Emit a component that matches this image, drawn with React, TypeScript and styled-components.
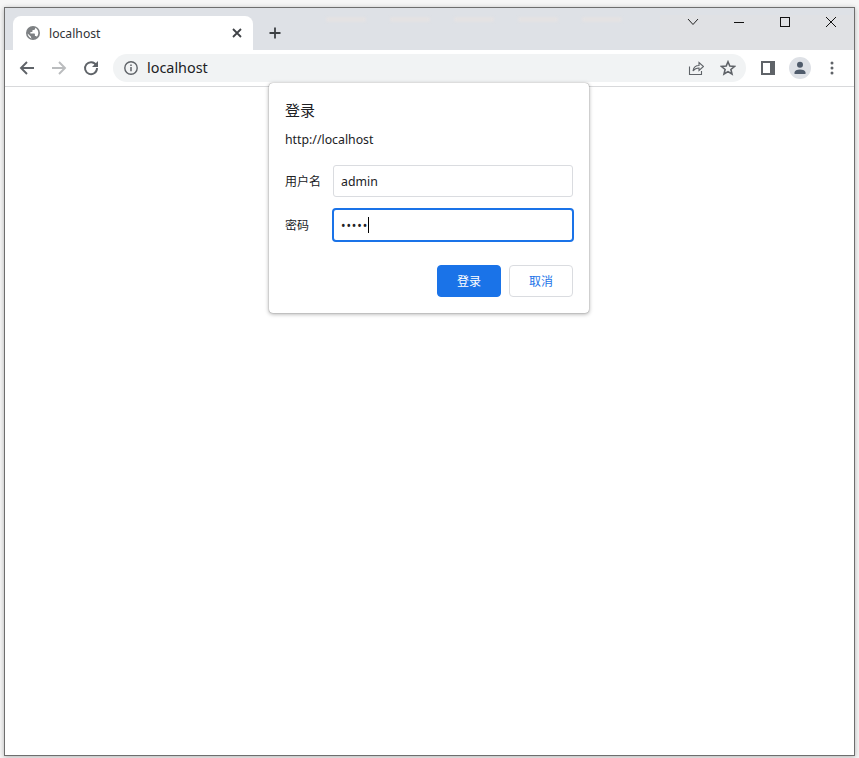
import React from 'react';
import styled, { createGlobalStyle } from 'styled-components';

const UI_FONT = `"Noto Sans", "Open Sans", "Noto Sans CJK SC", sans-serif`;
const CJK_FONT = `"Noto Sans CJK SC", "Noto Sans", sans-serif`;

const GlobalStyle = createGlobalStyle`
    html, body {
        margin: 0;
        height: 100%;
    }
    body {
        background: #f6f6f6;
        overflow: hidden;
        font-family: ${UI_FONT};
    }
`;

const Window = styled.div`
    position: relative;
    box-sizing: border-box;
    width: 851px;
    height: 749px;
    margin: 7px 0 0 4px;
    border: 1px solid #6e6e6e;
    background: #fff;
    box-shadow: 0 1px 5px rgba(0, 0, 0, 0.28);
    display: flex;
    flex-direction: column;
`;

const TabStrip = styled.div`
    height: 42px;
    flex: none;
    background: #dee1e6;
    display: flex;
    align-items: flex-end;
    padding-left: 8px;
`;

const Tab = styled.div`
    width: 240px;
    height: 34px;
    box-sizing: border-box;
    background: #fff;
    border-radius: 8px 8px 0 0;
    display: flex;
    align-items: center;
    padding: 0 8px 0 12px;
    gap: 8px;
`;

const TabTitle = styled.span`
    flex: 1;
    font-size: 12.2px;
    color: #303236;
`;

const NewTab = styled.div`
    width: 28px;
    height: 34px;
    margin-left: 8px;
    display: flex;
    align-items: center;
    justify-content: center;
`;

const GhostTabs = styled.div`
    flex: 1;
    align-self: flex-start;
    display: flex;
    gap: 24px;
    padding: 9px 0 0 37px;
`;

const GhostTab = styled.span<{ $w: number }>`
    width: ${p => p.$w}px;
    height: 5px;
    background: #e4e2e3;
    border-radius: 2px;
    filter: blur(0.8px);
`;

const Caption = styled.div`
    width: 194px;
    height: 35px;
    align-self: flex-end;
    flex: none;
    background: #e0e1e4;
    position: relative;
`;

const CaptionRow = styled.div`
    position: absolute;
    top: -7px;
    right: 0;
    display: flex;
    height: 28px;
`;

const CaptionButton = styled.div<{ $w: number }>`
    width: ${p => p.$w}px;
    display: flex;
    align-items: center;
    justify-content: center;
`;

const Toolbar = styled.div`
    height: 37px;
    flex: none;
    box-sizing: border-box;
    display: flex;
    align-items: center;
    padding: 0 6px 0 6px;
    background: #fff;
    border-bottom: 1px solid #d8d9db;
`;

const ToolButton = styled.div`
    width: 32px;
    height: 28px;
    flex: none;
    display: flex;
    align-items: center;
    justify-content: center;
`;

const Omnibox = styled.div`
    flex: 1;
    height: 28px;
    background: #f1f3f4;
    border-radius: 14px;
    display: flex;
    align-items: center;
    padding: 0 2px 0 10px;
    margin: 0 6px;
`;

const Address = styled.span`
    flex: 1;
    margin-left: 8px;
    margin-top: -1px;
    font-size: 14.4px;
    color: #202124;
`;

const Avatar = styled.div`
    width: 22px;
    height: 22px;
    border-radius: 50%;
    background: #dee1e6;
    display: flex;
    align-items: center;
    justify-content: center;
`;

const Page = styled.main`
    flex: 1;
    background: #fff;
`;

const Dialog = styled.form`
    position: absolute;
    left: 264px;
    top: 75px;
    width: 320px;
    height: 230px;
    box-sizing: border-box;
    padding: 16px;
    background: #fff;
    border-radius: 4px;
    box-shadow: 0 0 1px rgba(0, 0, 0, 0.5), 0 1px 4px rgba(0, 0, 0, 0.35);
    display: flex;
    flex-direction: column;
`;

const Title = styled.h2`
    margin: 1px 0 0;
    font: 400 15px/20px ${CJK_FONT};
    color: #202124;
`;

const Origin = styled.p`
    margin: 10px 0 0;
    font-size: 12.3px;
    line-height: 20px;
    color: #202124;
`;

const Field = styled.div<{ $mt: number }>`
    margin-top: ${p => p.$mt}px;
    display: flex;
    align-items: center;
`;

const Label = styled.label`
    width: 48px;
    flex: none;
    font: 400 12px/16px ${CJK_FONT};
    color: #202124;
`;

const InputBox = styled.div<{ $focus?: boolean }>`
    flex: 1;
    box-sizing: border-box;
    height: ${p => (p.$focus ? 34 : 32)}px;
    margin: ${p => (p.$focus ? '0 -1px' : '0')};
    border: ${p => (p.$focus ? '2px solid #1a73e8' : '1px solid #dadce0')};
    border-radius: ${p => (p.$focus ? 4 : 3)}px;
    padding-left: 7px;
    display: flex;
    align-items: center;
    font-size: 12.3px;
    color: #202124;
`;

const Dots = styled.span`
    font-size: 12px;
    letter-spacing: 0.9px;
    color: #202124;
`;

const Caret = styled.span`
    width: 1px;
    height: 16px;
    background: #000;
`;

const Actions = styled.div`
    margin-top: auto;
    display: flex;
    justify-content: flex-end;
    gap: 8px;
`;

const Button = styled.button<{ $primary?: boolean }>`
    width: 64px;
    height: 32px;
    box-sizing: border-box;
    border-radius: 4px;
    border: 1px solid ${p => (p.$primary ? '#1a73e8' : '#dadce0')};
    background: ${p => (p.$primary ? '#1a73e8' : '#fff')};
    color: ${p => (p.$primary ? '#fff' : '#1a73e8')};
    font: 400 12px/16px ${CJK_FONT};
    padding: 0;
`;

const Globe = () => (
    <svg width="16" height="16" viewBox="0 0 16 16">
        <circle cx="8" cy="8" r="7" fill="#7d8083" />
        <path
            d="M7.2 13.4C4.8 13 2.8 10.900 2.6 8.400l3.400 3.300v.8c0 .4.5.7 1.200.9zM11.900 11.800c-.2-.5-.7-.9-1.200-.9h-.8V9.100c0-.3-.3-.6-.6-.6H5.400V6.900h1.500c.3 0 .6-.3.6-.6V4.900h1.400c.7 0 1.200-.5 1.200-1.200v-.9c1.900.8 3.200 2.700 3.200 4.900 0 1.600-.6 3-1.500 4.100z"
            fill="#fff"
        />
    </svg>
);

const App: React.FC = () => (
    <React.Fragment>
        <GlobalStyle />
        <Window>
            <TabStrip>
                <Tab>
                    <Globe />
                    <TabTitle>localhost</TabTitle>
                    <svg width="16" height="16" viewBox="0 0 16 16">
                        <path d="M4 4l8 8M12 4l-8 8" stroke="#3f4246" strokeWidth="1.8" />
                    </svg>
                </Tab>
                <NewTab>
                    <svg width="16" height="16" viewBox="0 0 16 16">
                        <path d="M8 2.500v11M2.500 8h11" stroke="#3c4043" strokeWidth="1.8" />
                    </svg>
                </NewTab>
                <GhostTabs>
                    {[40, 40, 40, 40, 40].map((w, i) => (
                        <GhostTab key={i} $w={w} />
                    ))}
                </GhostTabs>
                <Caption>
                    <CaptionRow>
                        <CaptionButton $w={46}>
                            <svg width="12" height="8" viewBox="0 0 12 8">
                                <path d="M1 1l5 5.500L11 1" fill="none" stroke="#222" strokeWidth="1" />
                            </svg>
                        </CaptionButton>
                        <CaptionButton $w={46}>
                            <svg width="11" height="11" viewBox="0 0 11 11">
                                <path d="M0 5.500h10" stroke="#111" strokeWidth="1" />
                            </svg>
                        </CaptionButton>
                        <CaptionButton $w={46}>
                            <svg width="11" height="11" viewBox="0 0 11 11">
                                <rect x="0.500" y="0.500" width="9" height="9" fill="none" stroke="#111" />
                            </svg>
                        </CaptionButton>
                        <CaptionButton $w={46}>
                            <svg width="11" height="11" viewBox="0 0 11 11">
                                <path d="M0 0l10 10M10 0L0 10" stroke="#111" strokeWidth="1" />
                            </svg>
                        </CaptionButton>
                    </CaptionRow>
                </Caption>
            </TabStrip>
            <Toolbar>
                <ToolButton>
                    <svg width="16" height="16" viewBox="0 0 16 16">
                        <path d="M15 8H2.500M8 2L2 8l6 6" fill="none" stroke="#5f6368" strokeWidth="1.900" />
                    </svg>
                </ToolButton>
                <ToolButton>
                    <svg width="16" height="16" viewBox="0 0 16 16">
                        <path d="M1 8h12.500M8 2l6 6-6 6" fill="none" stroke="#babcbe" strokeWidth="1.900" />
                    </svg>
                </ToolButton>
                <ToolButton>
                    <svg width="16" height="16" viewBox="0 0 16 16">
                        <path d="M13.200 5.200A6 6 0 1 0 14 8" fill="none" stroke="#5f6368" strokeWidth="1.900" />
                        <path d="M15 1v6H9z" fill="#5f6368" />
                    </svg>
                </ToolButton>
                <Omnibox>
                    <svg width="16" height="16" viewBox="0 0 16 16">
                        <circle cx="8" cy="8" r="6.200" fill="none" stroke="#5f6368" strokeWidth="1.400" />
                        <path d="M8 7v4.200M8 4.600v1.400" stroke="#5f6368" strokeWidth="1.500" />
                    </svg>
                    <Address>localhost</Address>
                    <ToolButton>
                        <svg width="16" height="16" viewBox="0 0 16 16">
                            <path
                                d="M1.500 6.500v8h12v-3.500M5 11c.5-3.500 3-5.500 6-5.500V2.500L15.500 6.500 11 10.500V8c-2.500 0-4.500 1-6 3z"
                                fill="none"
                                stroke="#5f6368"
                                strokeWidth="1.100"
                            />
                        </svg>
                    </ToolButton>
                    <ToolButton>
                        <svg width="16" height="16" viewBox="0 0 16 16">
                            <path
                                d="M8 1.800l1.800 4.300 4.600.4-3.500 3 1.100 4.500L8 11.600 4 14l1.100-4.500-3.500-3 4.600-.4z"
                                fill="none"
                                stroke="#5f6368"
                                strokeWidth="1.600"
                            />
                        </svg>
                    </ToolButton>
                </Omnibox>
                <ToolButton>
                    <svg width="14" height="14" viewBox="0 0 14 14">
                        <path d="M0 0h14v14H0z" fill="#5f6368" />
                        <path d="M2 2h7v10H2z" fill="#fff" />
                    </svg>
                </ToolButton>
                <ToolButton>
                    <Avatar>
                        <svg width="14" height="14" viewBox="0 0 14 14">
                            <circle cx="7" cy="3.800" r="3" fill="#4f5b6b" />
                            <path d="M1.500 13v-1.500c0-2 2.500-3 5.500-3s5.500 1 5.500 3V13z" fill="#4f5b6b" />
                        </svg>
                    </Avatar>
                </ToolButton>
                <ToolButton>
                    <svg width="4" height="14" viewBox="0 0 4 14">
                        <circle cx="2" cy="2" r="1.500" fill="#5f6368" />
                        <circle cx="2" cy="7" r="1.500" fill="#5f6368" />
                        <circle cx="2" cy="12" r="1.500" fill="#5f6368" />
                    </svg>
                </ToolButton>
            </Toolbar>
            <Page />
            <Dialog>
                <Title>登录</Title>
                <Origin>http://localhost</Origin>
                <Field $mt={15}>
                    <Label>用户名</Label>
                    <InputBox>admin</InputBox>
                </Field>
                <Field $mt={11}>
                    <Label>密码</Label>
                    <InputBox $focus>
                        <Dots>•••••</Dots>
                        <Caret />
                    </InputBox>
                </Field>
                <Actions>
                    <Button type="button" $primary>
                        登录
                    </Button>
                    <Button type="button">取消</Button>
                </Actions>
            </Dialog>
        </Window>
    </React.Fragment>
);

export default App;
